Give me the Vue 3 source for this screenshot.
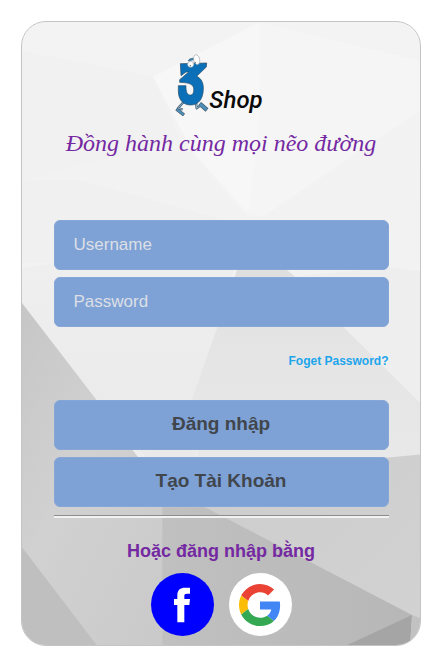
<script setup>
import { ref } from 'vue'

const username = ref('')
const password = ref('')
</script>

<template>
  <main class="card">
    <svg class="backdrop" viewBox="21 21 400 625" preserveAspectRatio="none" aria-hidden="true">
      <defs>
        <linearGradient id="base" x1="0" y1="0" x2="0" y2="1">
          <stop offset="0" stop-color="#f3f3f3" />
          <stop offset="0.4" stop-color="#f2f2f2" />
          <stop offset="1" stop-color="#e8e8e8" />
        </linearGradient>
        <linearGradient id="left" x1="0" y1="0" x2="1" y2="1">
          <stop offset="0" stop-color="#c6c6c6" />
          <stop offset="0.4" stop-color="#d1d1d1" />
          <stop offset="1" stop-color="#c8c8c8" />
        </linearGradient>
        <linearGradient id="right" x1="0" y1="0" x2="1" y2="1">
          <stop offset="0" stop-color="#cdcdcd" />
          <stop offset="1" stop-color="#d2d2d2" />
        </linearGradient>
        <linearGradient id="floor" x1="0" y1="0" x2="1" y2="0">
          <stop offset="0" stop-color="#c0c0c0" />
          <stop offset="1" stop-color="#b7b7b7" />
        </linearGradient>
        <linearGradient id="facet" x1="0" y1="0" x2="0" y2="1">
          <stop offset="0" stop-color="#dcdcdc" />
          <stop offset="0.4" stop-color="#e4e4e4" />
          <stop offset="1" stop-color="#e9e9e9" />
        </linearGradient>
        <linearGradient id="slope" x1="0" y1="0" x2="0" y2="1">
          <stop offset="0" stop-color="#efefef" />
          <stop offset="1" stop-color="#e8e8e8" />
        </linearGradient>
      </defs>
      <path fill="url(#base)" d="M21 21h400v625H21z" />
      <path fill="#f1f1f1" d="M21 50L153 76L180 140L21 180z" />
      <path fill="#f5f5f5" d="M153 76L260 21L421 60V110L265 215H247L193 152z" />
      <path fill="#f7f7f7" d="M153 76L260 21V110L249 212L193 152z" />
      <path fill="#f0f0f0" d="M21 180L80 180L225 220L240 262H21z" />
      <path fill="url(#slope)" d="M21 268L53 263L240 250L217 328L192 399L200 520L95 399L21 303z" />
      <path fill="#eeeeee" d="M295 276L389 267L421 271V403L345 328z" />
      <path fill="url(#facet)" d="M237 270L250 240L295 276L345 328L421 403V456L200 480L192 399L217 328z" />
      <path fill="url(#left)" d="M21 303L95 399L137 457L200 506L162 646H21z" />
      <path fill="url(#right)" d="M200 475L389 458L421 455V646H300L200 506z" />
      <path fill="url(#floor)" d="M162 500L190 500L413 616L411 646H162z" />
      <path fill="#bfbfbf" d="M21 548L96 646H21z" />
      <path fill="#a5a5a5" d="M413 616L411 646H348z" />
      <path fill="#c2c2c2" d="M413 616L421 619V646H411z" />
    </svg>

    <header class="brand">
      <div class="logo">
        <svg class="mascot" viewBox="33 27 102 189" aria-hidden="true">
          <g fill="none" stroke-linejoin="round">
            <path stroke="#4a6478" stroke-width="7" d="M62 167L42 190L56 193" />
            <path stroke="#8fb4cc" stroke-width="3" d="M62 167L42 190L56 193" />
            <path stroke="#3f5668" stroke-width="10" d="M37 192L60 210" />
            <path stroke="#4d8fb8" stroke-width="6" d="M38 193L59 209" />
            <path stroke="#4a6478" stroke-width="7" d="M96 171L98 190L113 179" />
            <path stroke="#8fb4cc" stroke-width="3" d="M96 171L98 190L113 179" />
            <path stroke="#3f5668" stroke-width="13" d="M107 176L129 195" />
            <path stroke="#4d8fb8" stroke-width="9" d="M108 177L128 194" />
          </g>
          <path fill="#0b70b8" stroke="#294b63" stroke-width="2" stroke-linejoin="round" d="M49 56L128 54L127 66L98 94C112 100 119 114 118 133C117 162 104 180 80 180C57 180 43 164 43 138L43 122L66 122C65 140 70 150 79 150C88 150 90 140 89 131C88 119 78 113 47 112L47 104L74 81L66 81L51 92z" />
          <path fill="none" stroke="#477c9f" stroke-width="7" d="M74 49Q80 39 92 43" />
          <ellipse cx="80" cy="58" rx="9" ry="9" fill="#fff" stroke="#a0a8ad" stroke-width="2" />
          <ellipse cx="98" cy="44" rx="9" ry="15" fill="#fff" stroke="#a0a8ad" stroke-width="2" transform="rotate(-12 98 44)" />
          <circle cx="79" cy="62" r="2" fill="#566" />
          <circle cx="94" cy="53" r="2" fill="#566" />
        </svg>
        <span class="shop">Shop</span>
      </div>
      <p class="slogan">Đồng hành cùng mọi nẽo đường</p>
    </header>

    <form class="form" @submit.prevent>
      <input v-model="username" class="field" type="text" placeholder="Username" aria-label="Username" />
      <input v-model="password" class="field" type="password" placeholder="Password" aria-label="Password" />
      <a class="forgot" href="#">Foget Password?</a>
      <button class="action" type="submit">Đăng nhập</button>
      <button class="action" type="button">Tạo Tài Khoản</button>
    </form>

    <hr class="rule" />

    <section class="social">
      <h2 class="social-title">Hoặc đăng nhập bằng</h2>
      <div class="social-list">
        <button class="round facebook" type="button" aria-label="Facebook">
          <svg width="62" height="62" viewBox="32 25 186 186" aria-hidden="true">
            <path fill="#fff" d="M111 170V118H101V100H111V89C111 73 119 66 135 66H149V84H140C134 84 132 86 132 91V100H149L147 118H132V170z" />
          </svg>
        </button>
        <button class="round google" type="button" aria-label="Google">
          <svg width="42" height="42" viewBox="0 0 48 48" aria-hidden="true">
            <path fill="#EA4335" d="M24 9.5c3.54 0 6.71 1.22 9.21 3.6l6.85-6.85C35.9 2.38 30.47 0 24 0 14.62 0 6.51 5.38 2.56 13.22l7.98 6.19C12.43 13.72 17.74 9.5 24 9.5z" />
            <path fill="#4285F4" d="M46.98 24.55c0-1.57-.15-3.09-.38-4.55H24v9.02h12.94c-.58 2.96-2.26 5.48-4.78 7.18l7.73 6c4.51-4.18 7.09-10.36 7.09-17.65z" />
            <path fill="#FBBC05" d="M10.53 28.59c-.48-1.45-.76-2.99-.76-4.59s.27-3.14.76-4.59l-7.98-6.19C.92 16.46 0 20.12 0 24c0 3.88.92 7.54 2.56 10.78l7.97-6.19z" />
            <path fill="#34A853" d="M24 48c6.48 0 11.93-2.13 15.89-5.81l-7.73-6c-2.15 1.45-4.92 2.3-8.16 2.3-6.26 0-11.57-4.22-13.47-9.91l-7.98 6.19C6.51 42.62 14.62 48 24 48z" />
          </svg>
        </button>
      </div>
    </section>
  </main>
</template>

<style>
body {
  background: #fff;
}
</style>

<style scoped>
.card {
  position: relative;
  box-sizing: border-box;
  max-width: 400px;
  margin: 21px auto;
  padding: 32px 31px 9px 32px;
  border: 1px solid #c4c4c4;
  border-radius: 25px;
  overflow: hidden;
  font-family: "Liberation Sans", Arial, sans-serif;
}

.backdrop {
  position: absolute;
  inset: 0;
  z-index: -1;
  width: 100%;
  height: 100%;
}

.brand {
  display: flex;
  flex-direction: column;
  align-items: center;
}

.logo {
  display: flex;
  align-items: flex-end;
  margin-right: 4px;
}

.mascot {
  width: 34px;
  height: 63px;
}

.shop {
  padding-bottom: 3px;
  color: #0a0a0a;
  font: italic 500 24px/28px Roboto, sans-serif;
}

.slogan {
  margin: 8px 0 0;
  color: #7429a2;
  font: italic 24px/36px "Liberation Serif", serif;
  white-space: nowrap;
}

.form {
  display: flex;
  flex-direction: column;
  gap: 7px;
  margin-top: 59px;
}

.field,
.action {
  box-sizing: border-box;
  width: 100%;
  height: 50px;
  border: 1px solid #86a6d8;
  border-radius: 6px;
  background: #7fa2d6;
  font-family: inherit;
}

.field {
  padding: 0 19px;
  color: #fff;
  font-size: 17px;
}

.field::placeholder {
  color: #dcdfe5;
  opacity: 1;
}

.forgot {
  align-self: flex-end;
  margin: 18px 0 23px;
  color: #1ca5ec;
  font-size: 12px;
  font-weight: bold;
  line-height: 18px;
  text-decoration: none;
}

.action {
  padding: 0 0 3px;
  color: #41464d;
  font-size: 19px;
  font-weight: bold;
}

.rule {
  margin: 8px 0 0;
  border: 0;
  border-top: 1px solid #8d8d8d;
  border-bottom: 2px solid #f2f2f2;
}

.social {
  display: flex;
  flex-direction: column;
  align-items: center;
}

.social-title {
  margin: 22px 0 11px;
  color: #7429a2;
  font-size: 18px;
  line-height: 22px;
}

.social-list {
  display: flex;
  gap: 15px;
}

.round {
  display: flex;
  align-items: center;
  justify-content: center;
  width: 63px;
  height: 63px;
  padding: 0;
  border: 0;
  border-radius: 50%;
}

.facebook {
  background: #0000fe;
}

.google {
  background: #fff;
}
</style>
